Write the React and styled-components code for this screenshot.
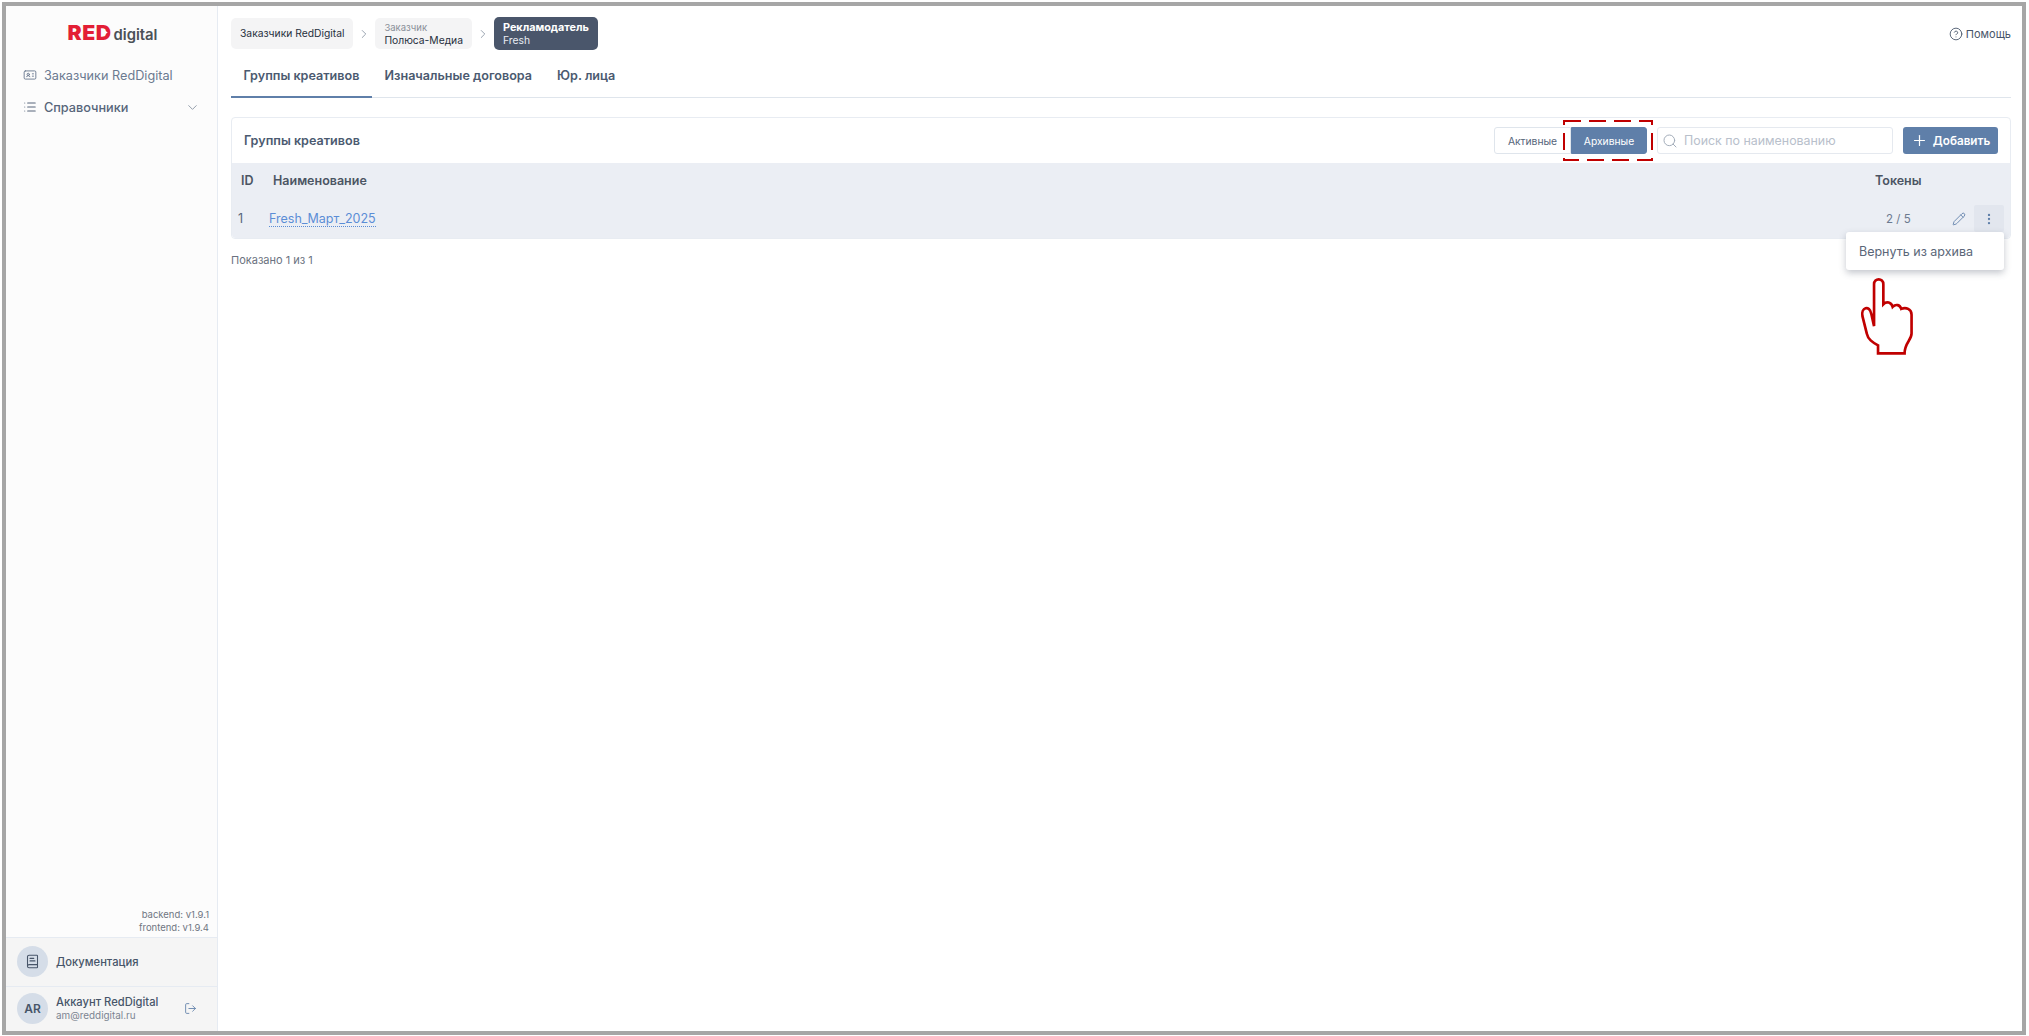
import styled, { createGlobalStyle } from "styled-components";
import {
  BookText,
  ChevronDown,
  ChevronRight,
  CircleHelp,
  EllipsisVertical,
  IdCard,
  List,
  LogOut,
  Pencil,
  Plus,
  Search,
} from "lucide-react";

const GlobalStyle = createGlobalStyle`
  html, body {
    margin: 0;
    height: 100%;
    background: #fff;
    overflow: hidden;
  }
  * {
    box-sizing: border-box;
  }
  body {
    font-family: Inter, "Noto Sans", sans-serif;
    color: #475569;
  }
`;

const App = () => {
  return (
    <Frame>
      <GlobalStyle />
      <Sidebar>
        <Logo>
          <LogoRed>
            RED
            <LogoPlay viewBox="0 0 6 8">
              <path d="M0 0 L6 4 L0 8 Z" />
            </LogoPlay>
          </LogoRed>
          <LogoDigital>digital</LogoDigital>
        </Logo>
        <Nav>
          <NavItem>
            <IdCard size={14} strokeWidth={1.6} />
            <span>Заказчики RedDigital</span>
          </NavItem>
          <NavItem $strong>
            <List size={14} strokeWidth={1.8} />
            <span>Справочники</span>
            <NavChevron>
              <ChevronDown size={15} strokeWidth={1.5} />
            </NavChevron>
          </NavItem>
        </Nav>
        <Versions>
          <div>backend: v1.9.1</div>
          <div>frontend: v1.9.4</div>
        </Versions>
        <FooterRow>
          <Avatar>
            <BookText size={15} strokeWidth={1.7} />
          </Avatar>
          <DocLabel>Документация</DocLabel>
        </FooterRow>
        <FooterRow>
          <Avatar>AR</Avatar>
          <UserInfo>
            <UserName>Аккаунт RedDigital</UserName>
            <UserMail>am@reddigital.ru</UserMail>
          </UserInfo>
          <LogoutButton>
            <LogOut size={13} strokeWidth={1.6} />
          </LogoutButton>
        </FooterRow>
      </Sidebar>

      <Main>
        <TopBar>
          <Crumbs>
            <Crumb>
              <CrumbValue>Заказчики RedDigital</CrumbValue>
            </Crumb>
            <CrumbArrow>
              <ChevronRight size={14} strokeWidth={1.5} />
            </CrumbArrow>
            <Crumb>
              <CrumbCaption>Заказчик</CrumbCaption>
              <CrumbValue>Полюса-Медиа</CrumbValue>
            </Crumb>
            <CrumbArrow>
              <ChevronRight size={14} strokeWidth={1.5} />
            </CrumbArrow>
            <Crumb $active>
              <CrumbCaption $active>Рекламодатель</CrumbCaption>
              <CrumbValue $active>Fresh</CrumbValue>
            </Crumb>
          </Crumbs>
          <Help>
            <CircleHelp size={14} strokeWidth={1.5} />
            Помощь
          </Help>
        </TopBar>

        <Tabs>
          <Tab $active>Группы креативов</Tab>
          <Tab>Изначальные договора</Tab>
          <Tab>Юр. лица</Tab>
        </Tabs>

        <Card>
          <CardHeader>
            <CardTitle>Группы креативов</CardTitle>
            <Toggle>
              <ToggleButton>Активные</ToggleButton>
              <ToggleButton $active>Архивные</ToggleButton>
              <DashedMark viewBox="0 0 90 41">
                <rect x="1" y="1" width="88" height="39" />
              </DashedMark>
            </Toggle>
            <SearchBox>
              <Search size={16} strokeWidth={1.5} color="#a3adba" />
              <SearchInput placeholder="Поиск по наименованию" readOnly />
            </SearchBox>
            <AddButton>
              <Plus size={17} strokeWidth={1.7} />
              Добавить
            </AddButton>
          </CardHeader>

          <HeadRow>
            <IdHead>ID</IdHead>
            <NameHead>Наименование</NameHead>
            <TokensHead>Токены</TokensHead>
          </HeadRow>

          <BodyRow>
            <IdCell>1</IdCell>
            <NameCell>
              <NameLink>Fresh_Март_2025</NameLink>
            </NameCell>
            <TokensCell>2 / 5</TokensCell>
            <EditButton>
              <Pencil size={14} strokeWidth={1.5} />
            </EditButton>
            <MoreButton>
              <EllipsisVertical size={14} strokeWidth={2} />
            </MoreButton>
            <Menu>Вернуть из архива</Menu>
            <HandMark viewBox="235 260 165 235">
              <path d="M280 408 L280 282 C280 262 308 262 308 282 L308 342 C318 332 332 336 336 350 C346 340 358 344 362 356 C376 350 393 356 393 374 L393 430 C393 450 372 458 372 490 L292 490 L292 466 C274 456 262 448 258 430 L245 378 C240 352 266 342 272 372 Z" />
            </HandMark>
          </BodyRow>
        </Card>

        <Shown>Показано 1 из 1</Shown>
      </Main>
    </Frame>
  );
};

export default App;

const Frame = styled.div`
  display: flex;
  height: 1033px;
  margin: 2px 3px 1px 2px;
  border: 4px solid #a6a6a6;
  background: #fff;
  overflow: hidden;
`;

/* Левая колонка */
const Sidebar = styled.aside`
  display: flex;
  flex-direction: column;
  flex: 0 0 212px;
  background: #fcfcfc;
  border-right: 1px solid #e6ebf2;
`;

const Logo = styled.div`
  display: flex;
  justify-content: center;
  align-items: baseline;
  gap: 2.5px;
  padding: 18px 0 0 4px;
  height: 53px;
`;

const LogoRed = styled.span`
  position: relative;
  font-size: 20px;
  line-height: 18px;
  font-weight: 900;
  letter-spacing: 0.5px;
  color: #e31e35;
  transform: scaleX(1.06);
  transform-origin: right center;
`;

/* Треугольник в просвете буквы D */
const LogoPlay = styled.svg`
  position: absolute;
  right: 4px;
  top: 4px;
  width: 6px;
  height: 9px;
  fill: #fcfcfc;
`;

const LogoDigital = styled.span`
  font-size: 14.8px;
  line-height: 18px;
  font-weight: 600;
  color: #4b5158;
`;

const Nav = styled.nav`
  display: flex;
  flex-direction: column;
  gap: 8px;
  padding: 4px 0 0 17px;
`;

const NavItem = styled.div`
  display: flex;
  align-items: center;
  gap: 7px;
  height: 24px;
  font-size: 12.7px;
  font-weight: ${(p) => (p.$strong ? 500 : 400)};
  color: ${(p) => (p.$strong ? "#56657a" : "#6b7a90")};
`;

const NavChevron = styled.span`
  display: flex;
  margin-left: auto;
  margin-right: 17px;
  color: #8d97a5;
`;

const Versions = styled.div`
  margin-top: auto;
  padding: 0 8px 3px 0;
  text-align: right;
  font-size: 9.5px;
  line-height: 12.5px;
  color: #6f7682;
`;

const FooterRow = styled.div`
  display: flex;
  align-items: center;
  gap: 8px;
  height: 48.5px;
  padding: 0 0 0 11px;
  background: #f5f5f5;
  border-top: 1px solid #e6ebf2;

  &:last-child {
    height: 45.5px;
  }
`;

const Avatar = styled.div`
  display: flex;
  align-items: center;
  justify-content: center;
  flex: 0 0 31px;
  height: 31px;
  border-radius: 50%;
  background: #d5dde8;
  color: #475569;
  font-size: 12px;
  font-weight: 600;
`;

const DocLabel = styled.span`
  font-size: 11.2px;
  font-weight: 500;
  color: #475569;
`;

const UserInfo = styled.div`
  display: flex;
  flex-direction: column;
  flex: 0 0 120px;
`;

const UserName = styled.span`
  font-size: 11.2px;
  line-height: 14px;
  font-weight: 500;
  color: #475569;
`;

const UserMail = styled.span`
  font-size: 9.9px;
  line-height: 13px;
  color: #7b8491;
`;

const LogoutButton = styled.span`
  display: flex;
  color: #5f7fa9;
`;

/* Основная часть */
const Main = styled.main`
  flex: 1;
  min-width: 0;
  padding: 11px 11px 0 13px;
`;

const TopBar = styled.div`
  display: flex;
  justify-content: space-between;
  align-items: center;
  height: 33px;
`;

const Crumbs = styled.div`
  display: flex;
  align-items: center;
`;

const Crumb = styled.div`
  display: flex;
  flex-direction: column;
  justify-content: center;
  height: ${(p) => (p.$active ? "33px" : "31px")};
  padding: 0 9px;
  border-radius: 5px;
  background: ${(p) => (p.$active ? "#4a566b" : "#f4f4f5")};
`;

const CrumbCaption = styled.span`
  font-size: ${(p) => (p.$active ? "10.8px" : "9.5px")};
  line-height: 13px;
  font-weight: ${(p) => (p.$active ? 700 : 400)};
  color: ${(p) => (p.$active ? "#fff" : "#8a8f98")};
`;

const CrumbValue = styled.span`
  font-size: 10.3px;
  line-height: 13px;
  font-weight: 400;
  color: ${(p) => (p.$active ? "#e8ecf2" : "#27303d")};
`;

const CrumbArrow = styled.span`
  display: flex;
  justify-content: center;
  width: 22px;
  color: #8d97a5;
`;

const Help = styled.a`
  display: flex;
  align-items: center;
  gap: 3px;
  font-size: 11px;
  color: #475569;
`;

const Tabs = styled.div`
  display: flex;
  height: 48px;
  border-bottom: 1px solid #dfe5ec;
`;

const Tab = styled.div`
  display: flex;
  align-items: center;
  height: 48px;
  padding: 4px 12.5px 0;
  font-size: 12.6px;
  font-weight: 600;
  color: #4b5a70;
  border-bottom: 2px solid ${(p) => (p.$active ? "#5f7fa9" : "transparent")};
`;

const Card = styled.section`
  margin-top: 19px;
  border: 1px solid #e8ecf2;
  border-radius: 4px;
`;

const CardHeader = styled.div`
  display: flex;
  align-items: center;
  height: 45px;
  padding: 0 12px 0 12px;
`;

const CardTitle = styled.h2`
  margin: 0 auto 0 0;
  font-size: 12.6px;
  font-weight: 600;
  color: #4b5a70;
`;

const Toggle = styled.div`
  position: relative;
  display: flex;
  height: 27px;
  margin-right: 10px;
`;

const ToggleButton = styled.div`
  display: flex;
  align-items: center;
  justify-content: center;
  width: ${(p) => (p.$active ? "76px" : "77px")};
  font-size: 10.3px;
  color: ${(p) => (p.$active ? "#fff" : "#56657a")};
  background: ${(p) => (p.$active ? "#5f7fa9" : "#fff")};
  border: 1px solid ${(p) => (p.$active ? "#5f7fa9" : "#dfe5ec")};
  border-radius: ${(p) => (p.$active ? "0 3px 3px 0" : "3px 0 0 3px")};
`;

/* Красная пунктирная рамка-пометка вокруг кнопки */
const DashedMark = styled.svg`
  position: absolute;
  left: 69px;
  top: -7px;
  width: 90px;
  height: 41px;
  fill: none;
  stroke: #c00000;
  stroke-width: 2;
  stroke-dasharray: 17 8;
`;

const SearchBox = styled.div`
  display: flex;
  align-items: center;
  gap: 6px;
  width: 236px;
  height: 27px;
  padding: 0 4px;
  margin-right: 10px;
  border: 1px solid #e5e9ef;
  border-radius: 3px;
`;

const SearchInput = styled.input`
  flex: 1;
  min-width: 0;
  border: 0;
  outline: 0;
  padding: 0;
  background: transparent;
  font-family: inherit;
  font-size: 12.4px;

  &::placeholder {
    color: #b8c0cb;
    opacity: 1;
  }
`;

const AddButton = styled.button`
  display: flex;
  align-items: center;
  justify-content: center;
  gap: 5px;
  width: 95px;
  height: 27px;
  padding: 0;
  border: 0;
  border-radius: 3px;
  background: #5f7fa9;
  color: #fff;
  font-family: inherit;
  font-size: 11.7px;
  font-weight: 600;
`;

const HeadRow = styled.div`
  display: flex;
  align-items: center;
  height: 36px;
  padding-bottom: 2px;
  background: #ebeef4;
  font-size: 12.5px;
  font-weight: 600;
  color: #4b5563;
`;

const IdHead = styled.div`
  flex: 0 0 41px;
  padding-left: 9px;
`;

const NameHead = styled.div`
  flex: 1;
`;

const TokensHead = styled.div`
  flex: 0 0 135px;
`;

const BodyRow = styled.div`
  position: relative;
  display: flex;
  align-items: center;
  height: 39px;
  padding-right: 6px;
  background: #ebeef4;
  border-radius: 0 0 4px 4px;
  font-size: 12.5px;
  color: #56657a;
`;

const IdCell = styled.div`
  flex: 0 0 37px;
  padding-left: 6px;
`;

const NameCell = styled.div`
  flex: 1;
`;

const NameLink = styled.a`
  color: #5b8dd6;
  border-bottom: 1px dotted #5b8dd6;
`;

const TokensCell = styled.div`
  flex: 0 0 58px;
  font-size: 11.5px;
  color: #6b7a90;
`;

const EditButton = styled.span`
  display: flex;
  justify-content: center;
  width: 30px;
  color: #5f7fa9;
`;

const MoreButton = styled.span`
  display: flex;
  align-items: center;
  justify-content: center;
  width: 30px;
  height: 27px;
  border-radius: 2px;
  background: #e2e6ee;
  color: #5f7fa9;
`;

const Menu = styled.div`
  position: absolute;
  top: 33px;
  right: 6px;
  display: flex;
  align-items: center;
  width: 158px;
  height: 38px;
  padding-left: 13px;
  background: #fff;
  border-radius: 3px;
  box-shadow: 0 3px 7px rgba(60, 70, 90, 0.3);
  font-size: 12.5px;
  color: #5a6678;
  z-index: 2;
`;

/* Рука-указатель поверх страницы */
const HandMark = styled.svg`
  position: absolute;
  top: 78px;
  right: 96px;
  width: 55px;
  height: 78px;
  fill: #fff;
  stroke: #c00000;
  stroke-width: 8;
  z-index: 3;
`;

const Shown = styled.div`
  margin-top: 14px;
  font-size: 11px;
  line-height: 14px;
  color: #6b7280;
`;
